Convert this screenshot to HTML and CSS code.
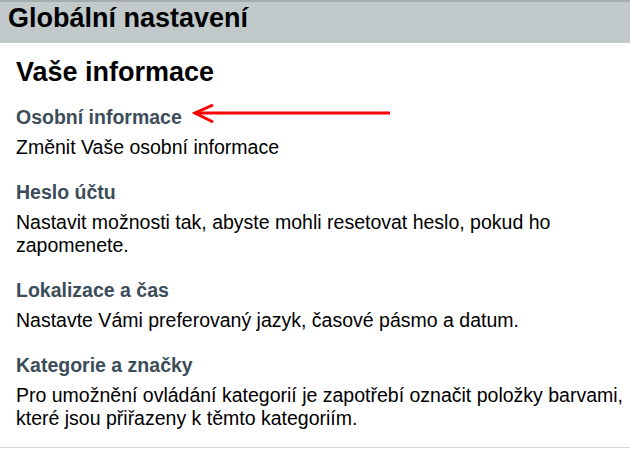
FILE: index.html
```html
<!DOCTYPE html>
<html>
<head>
    <meta charset="utf-8">
    <title>Globální nastavení</title>
    <link rel="stylesheet" href="styles.css">
</head>
<body>
    <div class="page-header">
        <h1>Globální nastavení</h1>
    </div>

    <div class="settings">
        <h2>Vaše informace</h2>

        <div class="item">
            <h3 class="item-title">
                Osobní informace
                <!-- šipka -->
                <svg class="arrow" width="200" height="22" viewBox="0 0 200 22">
                    <path d="M3,9 L198,9" stroke="#ff0000" stroke-width="3" fill="none"/>
                    <path d="M21,1 L3,9 L21,18" stroke="#ff0000" stroke-width="3" fill="none"/>
                </svg>
            </h3>
            <p>Změnit Vaše osobní informace</p>
        </div>

        <div class="item">
            <h3 class="item-title">Heslo účtu</h3>
            <p>Nastavit možnosti tak, abyste mohli resetovat heslo, pokud ho zapomenete.</p>
        </div>

        <div class="item">
            <h3 class="item-title">Lokalizace a čas</h3>
            <p>Nastavte Vámi preferovaný jazyk, časové pásmo a datum.</p>
        </div>

        <div class="item">
            <h3 class="item-title">Kategorie a značky</h3>
            <p>Pro umožnění ovládání kategorií je zapotřebí označit položky barvami, které jsou přiřazeny k těmto kategoriím.</p>
        </div>
    </div>
</body>
</html>
```

FILE: styles.css
```css
body {
    margin: 0;
    font-family: "Liberation Sans", Arial, sans-serif;
    color: #000;
    background: #fff;
}
.page-header {
    background-color: #c1c9ca;
    border-top: 2px solid #a5adaf;
    height: 41px;
    padding: 0 8px;
}
.page-header h1 {
    margin: 0;
    font-size: 27px;
    line-height: 33px;
    font-weight: bold;
}
.settings {
    padding: 13px 6px 17px 16px;
    border-bottom: 1px solid #d6d6d6;
}
.settings h2 {
    margin: 0 0 17px;
    font-size: 27px;
    line-height: 32px;
}
.item {
    margin-bottom: 21px;
}
.item:last-child {
    margin-bottom: 0;
}
.item-title {
    margin: 0 0 7px;
    font-size: 19.5px;
    line-height: 24px;
    color: #3b4d59;
    display: flex;
    align-items: center;
}
.arrow {
    margin-left: 10px;
    margin-top: -4px;
}
.item p {
    margin: 0;
    font-size: 19.5px;
    line-height: 23px;
}
```
